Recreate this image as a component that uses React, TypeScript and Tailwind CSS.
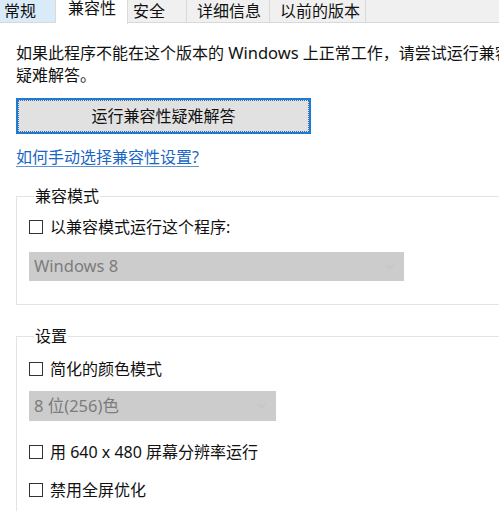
import { ChevronDown } from 'lucide-react';

const font = { fontFamily: '"Noto Sans", "Noto Sans CJK SC", sans-serif' };

const Tab = ({ label, className }: { label: string; className: string }) => (
    <div className={`h-full shrink-0 border-r border-[#d9d9d9] text-[16px] leading-[22px] whitespace-nowrap ${className}`}>
        {label}
    </div>
);

const Check = ({ label }: { label: string }) => (
    <div className="flex items-center h-[20px] whitespace-nowrap">
        <span className="w-[14px] h-[14px] border border-[#333] bg-white shrink-0" />
        <span className="ml-[7px] text-[16px] leading-[20px] text-[#111]">{label}</span>
    </div>
);

const Select = ({ value, className }: { value: string; className: string }) => (
    <div className={`flex items-center justify-between bg-[#cccccc] pl-[5px] pr-[8px] ${className}`}>
        <span className="text-[16.5px] text-[#7c7c7c]">{value}</span>
        <ChevronDown className="w-[12px] h-[12px] text-[#b8b8b8]" strokeWidth={1.5} />
    </div>
);

export default function App() {
    return (
        <div className="w-[499px] h-[511px] overflow-hidden bg-white text-[#111]" style={font}>
            {/* tab strip */}
            <div className="flex h-[23px] bg-[#f0f0f0] border-b border-[#d9d9d9]">
                <Tab label="常规" className="w-[56px] pl-[4px] bg-[#d9eaf9]" />
                <div className="h-[24px] w-[72px] shrink-0 pl-[12px] bg-white border-r border-[#d9d9d9] text-[16px] leading-[17px] relative z-10">
                    兼容性
                </div>
                <Tab label="安全" className="w-[59px] pl-[5px]" />
                <Tab label="详细信息" className="w-[83px] pl-[10px]" />
                <Tab label="以前的版本" className="w-[96px] pl-[10px]" />
            </div>

            <div className="pl-[16px] w-[620px]">
                <p className="mt-[19px] text-[16px] leading-[22px] whitespace-nowrap">
                    如果此程序不能在这个版本的 <span className="text-[16.5px]">Windows</span> 上正常工作，请尝试运行兼容性
                    <br />
                    疑难解答。
                </p>

                <button className="mt-[12px] w-[295px] h-[36px] border-2 border-[#1f7ad2] bg-[#e1e1e1] p-0 block">
                    <div className="h-full w-full border border-dotted border-[#3d6fa8] flex items-center justify-center text-[16px] text-[#111]">
                        运行兼容性疑难解答
                    </div>
                </button>

                <a className="block mt-[13px] w-fit text-[16px] leading-[20px] text-[#1a66c4] underline underline-offset-[3px] decoration-[#5f93d6]">
                    如何手动选择兼容性设置?
                </a>

                <fieldset className="mt-[19px] border border-[#e3e3e3] pl-[12px] pb-[23px]">
                    <legend className="ml-[5px] px-px text-[16px] leading-[20px]">兼容模式</legend>
                    <div className="mt-[11px]">
                        <Check label="以兼容模式运行这个程序:" />
                    </div>
                    <Select value="Windows 8" className="mt-[15px] w-[375px] h-[29px]" />
                </fieldset>

                <fieldset className="mt-[21px] border border-[#e3e3e3] pl-[12px] pb-[30px]">
                    <legend className="ml-[5px] px-px text-[16px] leading-[20px]">设置</legend>
                    <div className="mt-[13px]">
                        <Check label="简化的颜色模式" />
                    </div>
                    <Select value="8 位(256)色" className="mt-[12px] w-[247px] h-[30px]" />
                    <div className="mt-[21px]">
                        <Check label="用 640 x 480 屏幕分辨率运行" />
                    </div>
                    <div className="mt-[18px]">
                        <Check label="禁用全屏优化" />
                    </div>
                </fieldset>
            </div>
        </div>
    );
}
